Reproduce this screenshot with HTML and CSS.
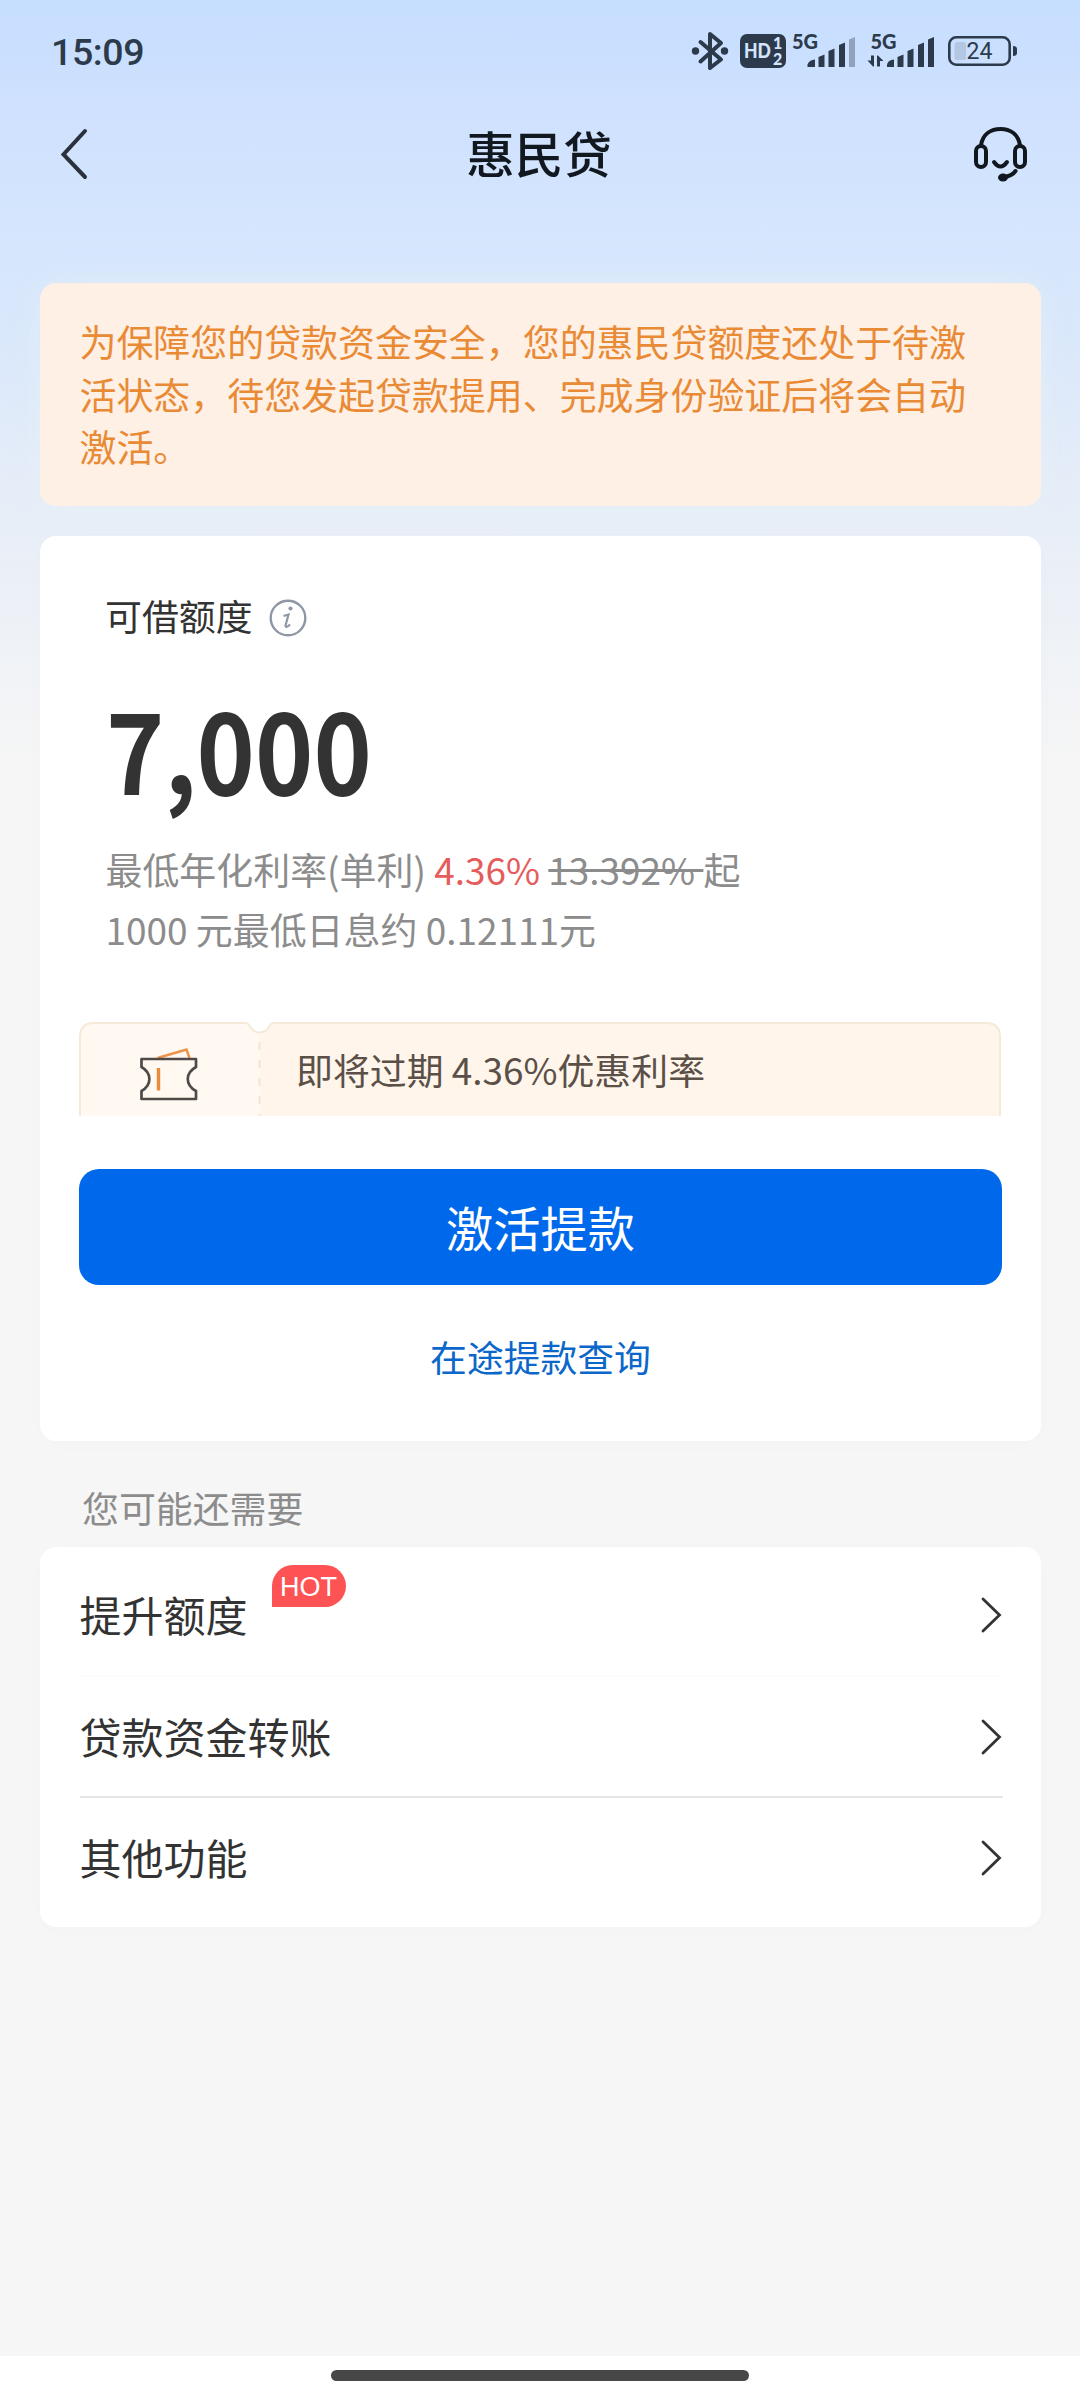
FILE: index.html
```html
<!DOCTYPE html>
<html lang="zh-CN">
<head>
<meta charset="utf-8">
<title>惠民贷</title>
<link rel="stylesheet" href="styles.css">
</head>
<body>
<div class="screen">
  <header class="status-bar">
    <span class="clock">15:09</span>
    <svg class="status-icons" viewBox="0 0 330 44" width="330" height="44">
      <g fill="none" stroke="#2c3a4b" stroke-width="4" stroke-linejoin="round" stroke-linecap="round">
        <path d="M10.500 12 L31 29.500 L20 38 V4 L31 13 L10.500 31.500"/>
      </g>
      <circle cx="5.500" cy="21" r="3.700" fill="#2c3a4b"/>
      <circle cx="34.500" cy="21" r="3.700" fill="#2c3a4b"/>
      <rect x="50" y="4" width="46" height="34" rx="7" fill="#2c3a4b"/>
      <text class="hd" x="54" y="28" textLength="27" lengthAdjust="spacingAndGlyphs">HD</text>
      <text class="hd-small" x="83" y="19">1</text>
      <text class="hd-small" x="83" y="34.500">2</text>
      <text class="net" x="102" y="19" textLength="26" lengthAdjust="spacingAndGlyphs">5G</text>
      <g fill="#2c3a4b">
        <path d="M117.500 37 V34.500 Q119 30 125 29.500 V37 Z"/>
        <path d="M128.500 37 V27 L134.500 24.500 V37 Z"/>
        <path d="M138.500 37 V21 L144.500 18.500 V37 Z"/>
        <path d="M149 37 V15 L155 12.500 V37 Z"/>
      </g>
      <path d="M159 37 V9.500 L165 7 V37 Z" fill="#91a2ba"/>
      <text class="net" x="180.500" y="19" textLength="26" lengthAdjust="spacingAndGlyphs">5G</text>
      <g fill="#2c3a4b">
        <path d="M177.500 30.500 H181 V25.500 H184 V36.500 H183 Z"/>
        <path d="M187 36.500 V25.500 H188 L193.500 31 H190 V36.500 Z"/>
        <path d="M197 37 V34.500 Q198 30 204 29.500 V37 Z"/>
        <path d="M207.500 37 V27 L213.500 24.500 V37 Z"/>
        <path d="M217.500 37 V21 L223.500 18.500 V37 Z"/>
        <path d="M228 37 V15 L234 12.500 V37 Z"/>
        <path d="M238 37 V9.500 L244 7 V37 Z"/>
      </g>
      <rect x="259.300" y="7.300" width="60.400" height="27.400" rx="7" fill="none" stroke="#2c3a4b" stroke-width="2.600"/>
      <rect x="264.500" y="12" width="11.500" height="18" rx="2.500" fill="#b3c7e3"/>
      <text class="battery-level" x="276.500" y="29">24</text>
      <path d="M323 16 Q327 16 327 19 V23 Q327 26 323 26 Z" fill="#2c3a4b"/>
    </svg>
  </header>

  <nav class="title-bar">
    <svg class="back" viewBox="0 0 30 54" width="30" height="54"><path d="M26 4 L4.500 27.500 L26 50" fill="none" stroke="#2b313c" stroke-width="4" stroke-linecap="round"/></svg>
    <h1>惠民贷</h1>
    <svg class="service" viewBox="0 0 56 58" width="56" height="58">
      <g fill="none" stroke="#10171f" stroke-width="4" stroke-linecap="round">
        <rect x="4" y="21" width="10" height="21" rx="5"/>
        <rect x="43" y="21" width="10" height="21" rx="5"/>
        <path d="M9 20 C11 9 19 4 28.500 4 S46 9 48 20"/>
        <path d="M22 37 Q28.500 46 35 37"/>
        <path d="M32 52 Q40 51 43.500 46"/>
      </g>
      <ellipse cx="31" cy="52.500" rx="5" ry="4" fill="#10171f"/>
    </svg>
  </nav>

  <main>
    <p class="notice">为保障您的贷款资金安全，您的惠民贷额度还处于待激活状态，待您发起贷款提用、完成身份验证后将会自动激活。</p>

    <section class="card quota">
      <div class="quota-label">
        <span>可借额度</span>
        <svg viewBox="0 0 38 38" width="38" height="38">
          <circle cx="19" cy="19" r="17.300" fill="none" stroke="#8f97a6" stroke-width="2.400"/>
          <circle cx="21.500" cy="9.500" r="2.100" fill="#8f97a6"/>
          <path d="M14.500 17 L19.500 15.500 L16.500 26.500 Q17 29.500 21 25.500" fill="none" stroke="#8f97a6" stroke-width="2.200"/>
        </svg>
      </div>
      <div class="amount">7,000</div>
      <div class="rate">最低年化利率(单利) <span class="now">4.36%</span> <s>13.392% </s>起</div>
      <div class="rate">1000 元最低日息约 0.12111元</div>

      <div class="coupon">
        <svg class="coupon-shape" viewBox="0 0 922 94" width="922" height="94">
          <path d="M1 96 V15 Q1 1 15 1 H166 Q169 1 170 3 Q174 10.500 180.500 10.500 V96 Z" fill="#fff9f2"/>
          <path d="M180.500 96 V10.500 Q187 10.500 191 3 Q192 1 195 1 H907 Q921 1 921 15 V96 Z" fill="#fff5eb"/>
          <path d="M1 96 V15 Q1 1 15 1 H166 Q169 1 170 3 Q174 10.500 180.500 10.500 T191 3 Q192 1 195 1 H907 Q921 1 921 15 V96" fill="none" stroke="#f5e9d8" stroke-width="2"/>
          <path d="M180.500 20 V94" stroke="#f1e5d8" stroke-width="2" stroke-dasharray="8 10"/>
        </svg>
        <div class="coupon-icon">
          <svg viewBox="0 0 60 56" width="60" height="56">
            <path d="M18.500 12 L47.500 3.500 L50.500 12" fill="none" stroke="#ec934b" stroke-width="2.400"/>
            <path d="M2.500 13 H57 V21 C46 27 46 39 57 45 V53 H2.500 V45 C13 39 13 27 2.500 21 Z" fill="none" stroke="#4f4a48" stroke-width="2.700" stroke-linejoin="round"/>
            <path d="M19.500 22 V44.500" stroke="#ec8a3c" stroke-width="3.400"/>
          </svg>
        </div>
        <span class="coupon-text">即将过期 4.36%优惠利率</span>
      </div>

      <button class="primary">激活提款</button>
      <a class="query">在途提款查询</a>
    </section>

    <h2>您可能还需要</h2>

    <section class="card menu">
      <div class="row faint"><span>提升额度</span><em class="hot">HOT</em><svg viewBox="0 0 22 38" width="22" height="38"><path d="M3 3 L19.500 19 L3 35" /></svg></div>
      <div class="row"><span>贷款资金转账</span><svg viewBox="0 0 22 38" width="22" height="38"><path d="M3 3 L19.500 19 L3 35" /></svg></div>
      <div class="row"><span>其他功能</span><svg viewBox="0 0 22 38" width="22" height="38"><path d="M3 3 L19.500 19 L3 35" /></svg></div>
    </section>
  </main>

  <footer><div class="home-bar"></div></footer>
</div>
</body>
</html>
```
FILE: styles.css
```css
* { box-sizing: border-box; margin: 0; padding: 0; }

body {
  font-family: "Noto Sans CJK SC", sans-serif;
  color: #333;
  background: #f6f6f6;
}

.screen {
  width: 1080px;
  height: 2400px;
  display: flex;
  flex-direction: column;
  background: linear-gradient(#c6deff 0, #cfe1fe 110px, #d5e6fd 240px, #dae8fb 340px, #e6edf8 490px, #f6f6f6 770px);
}

.status-bar {
  height: 104px;
  padding: 0 60px 0 51px;
  display: flex;
  align-items: center;
  justify-content: space-between;
}
.clock {
  font: 500 37.5px/40px Roboto, sans-serif;
  letter-spacing: -.4px;
  color: #2c3a4b;
}
.status-icons text { font-family: Lato, sans-serif; font-weight: 700; fill: #2c3a4b; }
.status-icons .hd { font-size: 20px; font-weight: 900; fill: #d3e4fd; }
.status-icons .hd-small { font-size: 16px; font-weight: 900; fill: #d3e4fd; }
.status-icons .net { font-size: 20px; font-weight: 900; }
.status-icons .battery-level { font-family: Roboto, sans-serif; font-size: 23px; font-weight: 400; }

.title-bar {
  height: 100px;
  padding: 0 52px 0 59px;
  display: flex;
  align-items: center;
  justify-content: space-between;
}
.title-bar h1 {
  font-size: 48.5px;
  line-height: 60px;
  font-weight: 500;
  color: #12181f;
  padding: 0 0 5px 17px;
}

main { flex: 1; padding: 79px 39px 0 40px; }

.notice {
  height: 223px;
  padding: 32px 46px 0 39.5px;
  border-radius: 16px;
  background: #fff0e6;
  box-shadow: 0 0 30px rgba(228, 241, 246, .6);
  color: #e98a35;
  font-size: 36.95px;
  line-height: 52.5px;
}

.card {
  border-radius: 16px;
  background: #fff;
  box-shadow: 0 4px 30px rgba(0, 0, 0, .012);
}

.quota {
  height: 905px;
  margin-top: 30px;
  padding: 52px 39px 0;
}
.quota-label {
  height: 60px;
  padding-left: 26px;
  display: flex;
  align-items: center;
  gap: 16px;
  font-size: 36.9px;
  line-height: 56px;
}
.quota-label span { padding-bottom: 6px; }
.amount {
  height: 157px;
  margin: 21px 0 0 27px;
  font-size: 99px;
  line-height: 157px;
  font-weight: 700;
  transform: scaleY(1.11);
}
.rate {
  padding-left: 26.500px;
  font-size: 36.95px;
  line-height: 60px;
  color: #8c8c8c;
  white-space: pre;
}
.rate:nth-child(3) { margin-top: 13px; }
.now { color: #e65c5c; }

.coupon {
  position: relative;
  height: 94px;
  margin: 63px 0 0 0;
  width: 922px;
  display: flex;
}
.coupon-shape { position: absolute; inset: 0; }
.coupon-icon {
  position: relative;
  width: 180px;
  padding: 24px 0 0 60px;
}
.coupon-text {
  position: relative;
  padding: 19px 0 0 37px;
  font-size: 36.9px;
  line-height: 56px;
  color: #5b5048;
}

.primary {
  display: block;
  width: 923px;
  height: 116px;
  margin-top: 53px;
  border: 0;
  border-radius: 20px;
  background: #0069eb;
  color: #fff;
  font: 400 47.2px/68px "Noto Sans CJK SC", sans-serif;
}
.query {
  display: block;
  margin-top: 43px;
  text-align: center;
  font-size: 36.8px;
  line-height: 56px;
  color: #0b67c9;
}

h2 {
  padding: 38px 0 0 42px;
  height: 106px;
  font-size: 36.9px;
  line-height: 56px;
  font-weight: 400;
  color: #8c8c8c;
}

.menu { height: 380px; padding: 8px 38px 0 39.500px; }
.row {
  display: flex;
  align-items: center;
  height: 121.500px;
  font-size: 42px;
  line-height: 60px;
  border-bottom: 2px solid #e6e6e6;
}
.row.faint { border-color: #fcfcfc; }
.row:last-child { border: 0; height: 120px; }
.row span { padding-bottom: 2px; }
.row:nth-child(2) span { padding-bottom: 0; }
.row svg {
  margin: 0 1px 0 auto;
  fill: none;
  stroke: #333;
  stroke-width: 2.8;
  stroke-linecap: round;
}
.row:nth-child(2) svg { margin-top: 2px; }
.hot {
  align-self: flex-start;
  width: 74px;
  height: 42px;
  margin: 10px 0 0 24px;
  border-radius: 21px 21px 21px 0;
  background: #fe5355;
  color: #fff;
  font: 400 27px/45px "Liberation Sans", sans-serif;
  text-align: center;
}

footer {
  height: 44px;
  padding-top: 14px;
  background: #fff;
}
.home-bar {
  width: 418px;
  height: 11px;
  margin: 0 auto;
  border-radius: 6px;
  background: #474747;
}
```
